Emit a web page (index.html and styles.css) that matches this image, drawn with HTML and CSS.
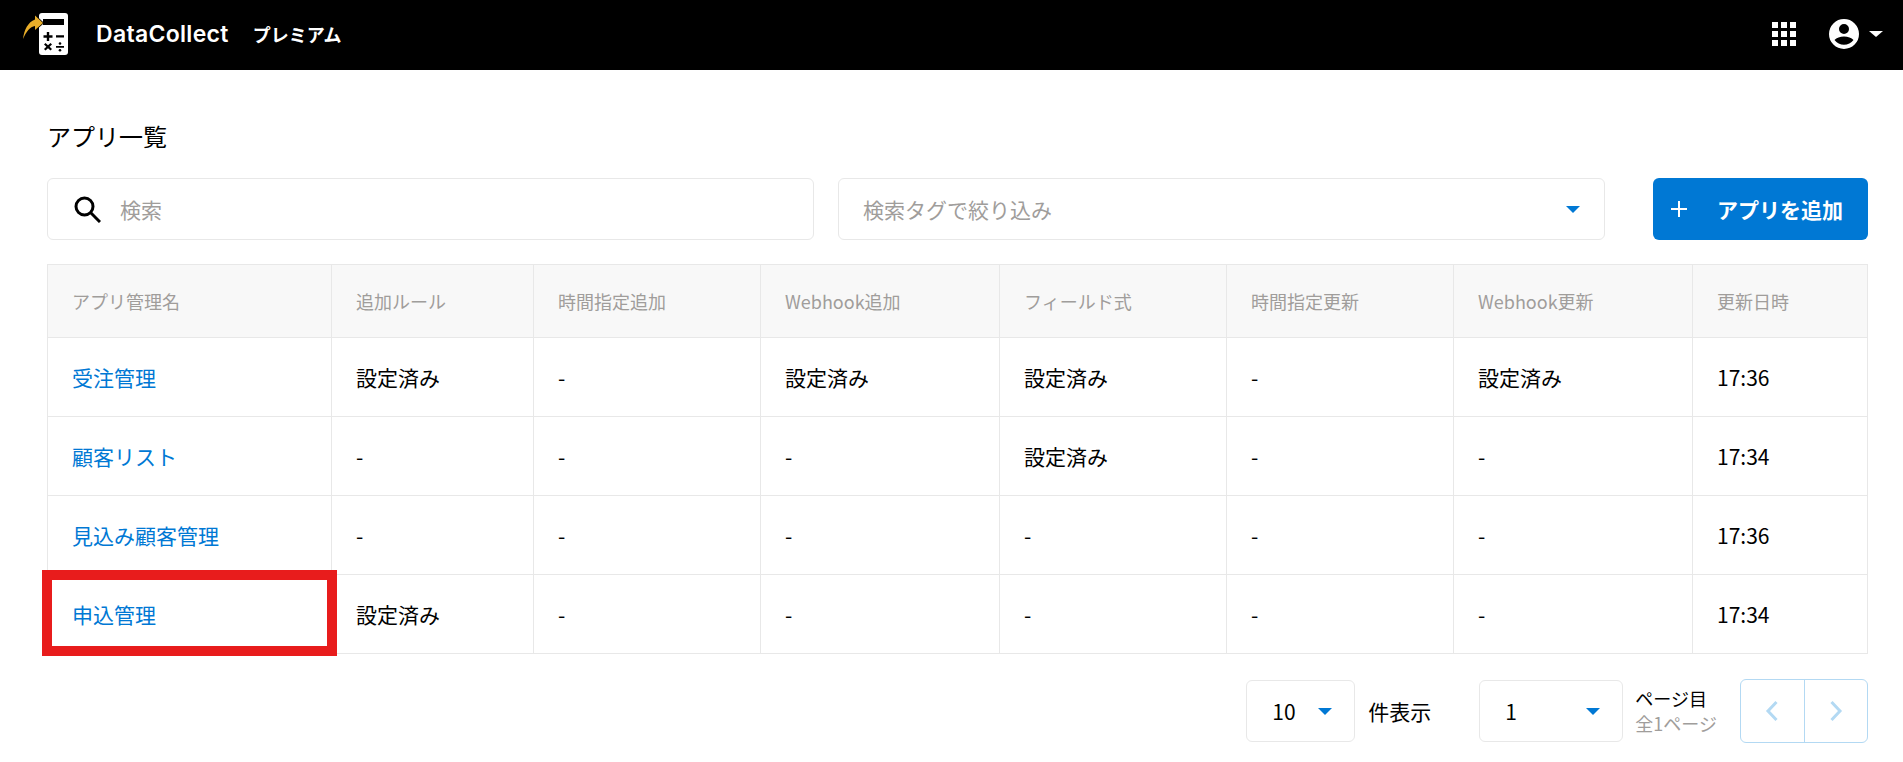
FILE: index.html
```html
<!DOCTYPE html>
<html lang="ja">
<head>
<meta charset="utf-8">
<title>アプリ一覧</title>
<link rel="stylesheet" href="styles.css">
</head>
<body>
<header class="topbar">
  <div class="brand">
    <svg class="logo" viewBox="0 0 48 44" width="48" height="44">
      <path fill="#fff" d="M21 0h23a3 3 0 0 1 3 3v36a3 3 0 0 1-3 3H21a3 3 0 0 1-3-3V3a3 3 0 0 1 3-3z"/>
      <rect x="22" y="6" width="21" height="6" fill="#000"/>
      <path fill="#000" d="M25.800 19h2.400v3.300h3.300v2.400h-3.300V28h-2.400v-3.300h-3.300v-2.400h3.300zM35 22.300h8v2.200h-8zM23 31.500l1.500-1.500 2.500 2.300 2.500-2.300 1.500 1.500-2.400 2.300 2.400 2.300-1.500 1.500-2.500-2.300-2.500 2.300-1.500-1.500 2.400-2.300zM35 33h8v1.800h-8z"/>
      <circle cx="39" cy="30.500" r="1.300" fill="#000"/><circle cx="39" cy="37.300" r="1.300" fill="#000"/>
      <path fill="#e9ae29" stroke="#000" stroke-width="1.500" paint-order="stroke" d="M2 26C3 17 7 9 14 6.500V2.500L22 10l-8 7v-4C9 13.500 5 19 2 26z"/>
    </svg>
    <span class="brand-name">DataCollect</span>
    <span class="plan">プレミアム</span>
  </div>
  <div class="top-actions">
    <svg class="apps" viewBox="0 0 24 24" width="24" height="24"><path fill="#fff" d="M0 0h6v6H0zM9 0h6v6H9zM18 0h6v6h-6zM0 9h6v6H0zM9 9h6v6H9zM18 9h6v6h-6zM0 18h6v6H0zM9 18h6v6H9zM18 18h6v6h-6z"/></svg>
    <svg class="account" viewBox="0 0 30 30" width="30" height="30"><path fill="#fff" fill-rule="evenodd" d="M15 0a15 15 0 1 0 0 30a15 15 0 0 0 0-30zM15 5a5 5 0 1 1 0 10a5 5 0 0 1 0-10zM15 17.500c4 0 7.500 1.400 9.500 3.500a12 12 0 0 1-19 0c2-2.100 5.500-3.500 9.500-3.500z"/></svg>
    <span class="caret caret-white"></span>
  </div>
</header>
<main class="content">
  <h1 class="title">アプリ一覧</h1>
  <div class="toolbar">
    <div class="field">
      <svg class="search-icon" viewBox="0 0 27 27" width="27" height="27"><circle cx="10.500" cy="10.500" r="8.500" fill="none" stroke="#000" stroke-width="3"/><path d="M16.500 16.500L26 26" stroke="#000" stroke-width="3" fill="none"/></svg>
      <span class="placeholder">検索</span>
    </div>
    <div class="field field-tags">
      <span class="placeholder">検索タグで絞り込み</span>
      <span class="caret caret-blue"></span>
    </div>
    <button class="add-btn" type="button">
      <svg class="plus" viewBox="0 0 16 16" width="16" height="16"><path d="M8 0v16M0 8h16" stroke="#fff" stroke-width="2" fill="none"/></svg>
      <span>アプリを追加</span>
    </button>
  </div>
  <div class="table-wrap">
    <table class="apps-table">
      <colgroup>
        <col class="c1"><col class="c2"><col class="c3"><col class="c4"><col class="c5"><col class="c6"><col class="c7"><col class="c8">
      </colgroup>
      <thead>
        <tr><th>アプリ管理名</th><th>追加ルール</th><th>時間指定追加</th><th>Webhook追加</th><th>フィールド式</th><th>時間指定更新</th><th>Webhook更新</th><th>更新日時</th></tr>
      </thead>
      <tbody>
        <tr><td><a class="app-link">受注管理</a></td><td>設定済み</td><td>-</td><td>設定済み</td><td>設定済み</td><td>-</td><td>設定済み</td><td>17:36</td></tr>
        <tr><td><a class="app-link">顧客リスト</a></td><td>-</td><td>-</td><td>-</td><td>設定済み</td><td>-</td><td>-</td><td>17:34</td></tr>
        <tr><td><a class="app-link">見込み顧客管理</a></td><td>-</td><td>-</td><td>-</td><td>-</td><td>-</td><td>-</td><td>17:36</td></tr>
        <tr><td><a class="app-link">申込管理</a></td><td>設定済み</td><td>-</td><td>-</td><td>-</td><td>-</td><td>-</td><td>17:34</td></tr>
      </tbody>
    </table>
    <div class="highlight"></div>
  </div>
  <div class="pagination">
    <div class="select select-size"><span>10</span><span class="caret caret-blue"></span></div>
    <span class="per-page">件表示</span>
    <div class="select select-page"><span>1</span><span class="caret caret-blue"></span></div>
    <div class="page-info"><span>ページ目</span><span class="page-total">全1ページ</span></div>
    <div class="pager">
      <span class="pager-btn"><svg viewBox="0 0 14 22" width="14" height="22"><path d="M11.500 2L3 11l8.500 9" fill="none" stroke="#b3d9f3" stroke-width="3"/></svg></span>
      <span class="pager-btn"><svg viewBox="0 0 14 22" width="14" height="22"><path d="M2.500 2L11 11l-8.500 9" fill="none" stroke="#b3d9f3" stroke-width="3"/></svg></span>
    </div>
  </div>
</main>
</body>
</html>
```
FILE: styles.css
```css
* { box-sizing: border-box; }
html, body { margin: 0; padding: 0; }
body {
  width: 1903px;
  height: 762px;
  overflow: hidden;
  background: #fff;
  color: #000;
  font-family: "Noto Sans CJK JP", "Noto Sans", sans-serif;
  font-size: 21px;
}
.topbar {
  height: 70px;
  background: #000;
  display: flex;
  align-items: center;
  justify-content: space-between;
  padding: 0 20px 2px 21px;
  color: #fff;
}
.brand { display: flex; align-items: center; }
.logo { margin-top: 1px; margin-bottom: -1px; }
.brand-name {
  font-family: Inter, sans-serif;
  font-weight: 600;
  font-size: 23px;
  letter-spacing: 0.3px;
  margin-left: 27px;
}
.plan { font-weight: 700; font-size: 18px; margin-left: 24px; }
.top-actions { display: flex; align-items: center; }
.account { margin-left: 33px; }
.caret {
  display: block;
  width: 0; height: 0;
  border-left: 7.5px solid transparent;
  border-right: 7.5px solid transparent;
  border-top: 7.5px solid #0078d4;
}
.caret-white {
  border-top-color: #fff;
  border-left-width: 7px;
  border-right-width: 7px;
  border-top-width: 6px;
  margin-left: 10px;
}
.content { padding: 0 35px 0 47px; }
.title {
  margin: 0;
  padding-top: 48px;
  height: 108px;
  font-size: 24px;
  font-weight: 400;
  line-height: 36px;
}
.toolbar { display: flex; align-items: stretch; height: 62px; }
.field {
  width: 767px;
  border: 1px solid #e8e8e8;
  border-radius: 6px;
  display: flex;
  align-items: center;
  padding: 0 24px;
}
.field-tags { margin-left: 24px; justify-content: space-between; }
.search-icon { margin-right: 19px; margin-left: 2px; }
.placeholder { color: #a09d9b; font-size: 21px; }
.add-btn {
  margin-left: 48px;
  width: 215px;
  background: #0078d4;
  color: #fff;
  border: 0;
  border-radius: 6px;
  display: flex;
  align-items: center;
  padding: 0 0 0 18px;
  font: 700 21px "Noto Sans CJK JP", sans-serif;
}
.plus { margin-right: 30px; }
.table-wrap { position: relative; margin-top: 24px; }
.apps-table {
  width: 1820px;
  table-layout: fixed;
  border-collapse: collapse;
  border: 1px solid #e8e8e8;
}
.c1 { width: 284px; } .c2 { width: 202px; } .c3 { width: 227px; } .c4 { width: 239px; }
.c5 { width: 227px; } .c6 { width: 227px; } .c7 { width: 239px; } .c8 { width: 175px; }
.apps-table th, .apps-table td {
  border: 1px solid #e8e8e8;
  padding: 0 24px;
  text-align: left;
  white-space: nowrap;
}
.apps-table th {
  height: 73px;
  background: #f8f8f8;
  color: #a09d9b;
  font-weight: 400;
  font-size: 18px;
}
.apps-table td { height: 79px; font-size: 21px; }
.app-link { color: #0078d4; }
.highlight {
  position: absolute;
  left: -5px;
  bottom: -2px;
  width: 295px;
  height: 86px;
  border: 10px solid #e81c1c;
}
.pagination {
  display: flex;
  justify-content: flex-end;
  align-items: center;
  margin-top: 25px;
}
.select {
  height: 62px;
  border: 1px solid #e8e8e8;
  border-radius: 6px;
  display: flex;
  align-items: center;
  justify-content: space-between;
  font-size: 21px;
}
.select-size { width: 109px; padding: 0 22px 0 25px; }
.select-page { width: 144px; padding: 0 22px 0 25px; }
.per-page { font-size: 21px; margin: 0 48px 0 13px; }
.page-info {
  display: flex;
  flex-direction: column;
  margin-left: 12px;
  font-size: 18px;
  line-height: 25px;
}
.page-total { color: #a09d9b; }
.pager {
  margin-left: 23px;
  width: 128px;
  height: 64px;
  border: 1px solid #b3d9f3;
  border-radius: 6px;
  display: flex;
}
.pager-btn { flex: 1; display: flex; align-items: center; justify-content: center; }
.pager-btn + .pager-btn { border-left: 1px solid #b3d9f3; }
```
